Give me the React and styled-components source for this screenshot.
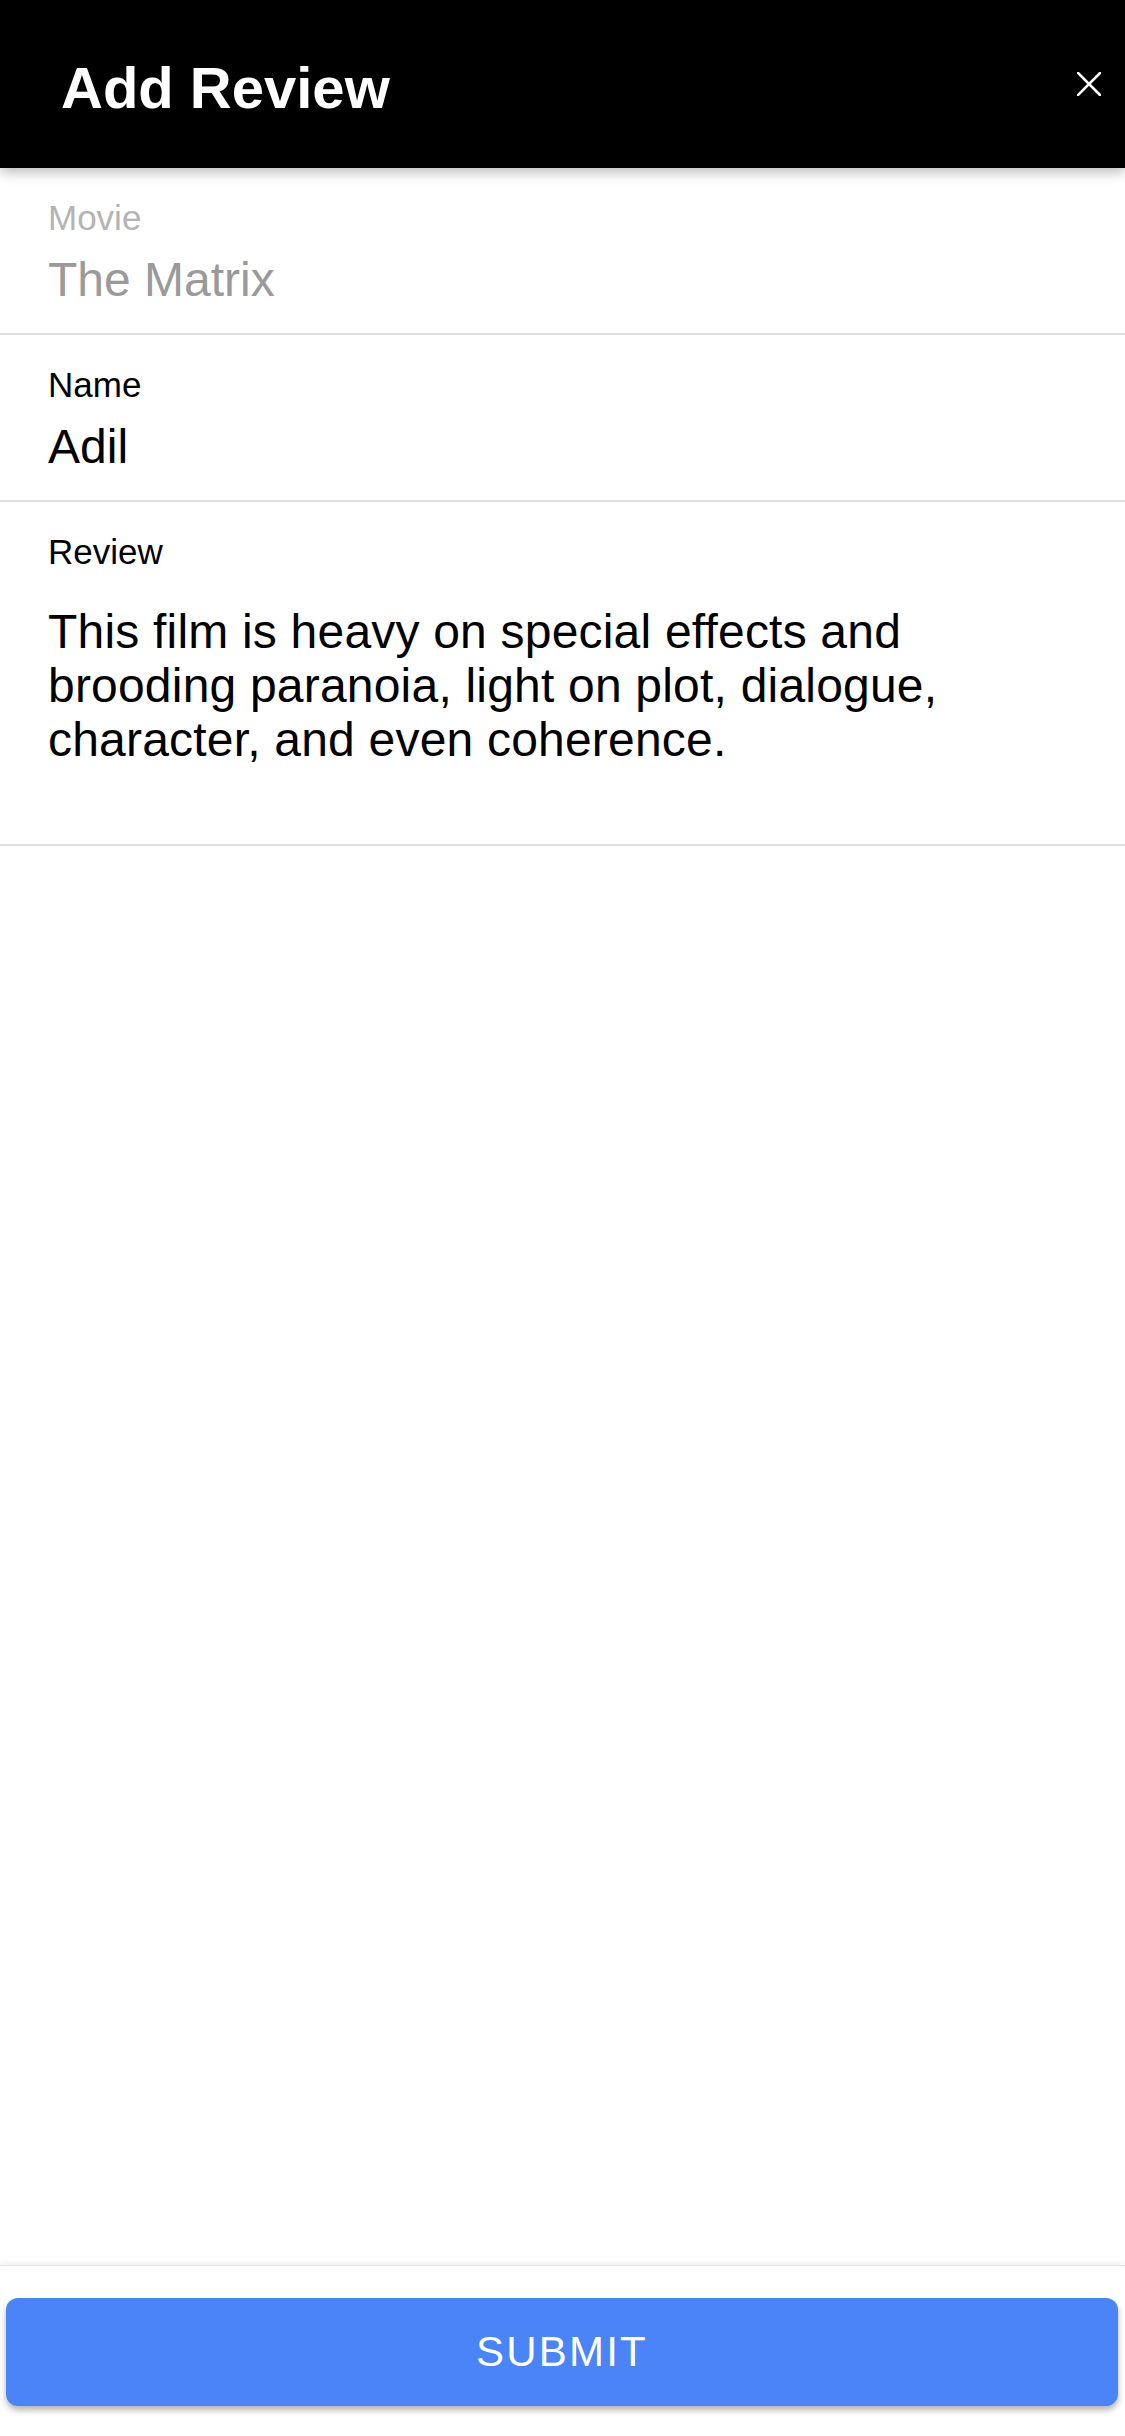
import React from "react";
import styled, { createGlobalStyle } from "styled-components";

const GlobalStyle = createGlobalStyle`
  html, body {
    margin: 0;
    padding: 0;
    background: #ffffff;
    font-family: "Liberation Sans", Arial, Helvetica, sans-serif;
  }
  * { box-sizing: border-box; }
`;

const Screen = styled.div`
  width: 1125px;
  height: 2436px;
  display: flex;
  flex-direction: column;
  background: #ffffff;
  overflow: hidden;
`;

const Header = styled.header`
  height: 168px;
  flex: 0 0 168px;
  background: #000000;
  display: flex;
  align-items: center;
  justify-content: space-between;
  padding: 0 24px 0 61px;
  box-shadow: 0 4px 12px rgba(0, 0, 0, 0.28);
  position: relative;
  z-index: 2;
`;

const Title = styled.h1`
  margin: 8px 0 0;
  font-size: 58px;
  line-height: 58px;
  font-weight: 700;
  color: #ffffff;
`;

const CloseButton = styled.button`
  width: 24px;
  height: 24px;
  padding: 0;
  border: none;
  background: transparent;
  display: flex;
  align-items: center;
  justify-content: center;
  cursor: pointer;
`;

const Form = styled.div`
  display: flex;
  flex-direction: column;
`;

const Field = styled.div`
  display: flex;
  flex-direction: column;
  padding: 29px 48px ${(p) => p.$bottom || 25}px;
  border-bottom: 2px solid #dedede;
`;

const Label = styled.div`
  font-size: 35px;
  line-height: 41px;
  color: ${(p) => (p.$disabled ? "#b4b4b4" : "#000000")};
`;

const Value = styled.div`
  margin-top: ${(p) => (p.$multiline ? 33 : 14)}px;
  font-size: 48px;
  line-height: ${(p) => (p.$multiline ? 54 : 56)}px;
  letter-spacing: ${(p) => (p.$multiline ? "0.2px" : "0")};
  color: ${(p) => (p.$disabled ? "#9a9a9a" : "#000000")};
`;

const Spacer = styled.div`
  flex: 1;
`;

const Footer = styled.footer`
  flex: 0 0 170px;
  padding: 32px 7px 30px 6px;
  background: #ffffff;
  border-top: 1px solid #e6e6e6;
  box-shadow: 0 -2px 5px rgba(0, 0, 0, 0.06);
  display: flex;
`;

const SubmitButton = styled.button`
  flex: 1;
  height: 108px;
  border: none;
  border-radius: 12px;
  background: #4a84f6;
  color: #ffffff;
  font-family: "Liberation Sans", Arial, Helvetica, sans-serif;
  font-size: 42px;
  letter-spacing: 2.2px;
  font-weight: 400;
  box-shadow: 0 4px 6px rgba(0, 0, 0, 0.3);
  cursor: pointer;
`;

export default function App() {
  return (
    <>
      <GlobalStyle />
      <Screen>
        <Header>
          <Title>Add Review</Title>
          <CloseButton aria-label="Close">
            <svg width="24" height="24" viewBox="0 0 24 24">
              <path d="M1 1 L23 23 M23 1 L1 23" stroke="#ffffff" strokeWidth="2.6" strokeLinecap="square" fill="none" />
            </svg>
          </CloseButton>
        </Header>
        <Form>
          <Field>
            <Label $disabled>Movie</Label>
            <Value $disabled>The Matrix</Value>
          </Field>
          <Field>
            <Label>Name</Label>
            <Value>Adil</Value>
          </Field>
          <Field $bottom={77}>
            <Label>Review</Label>
            <Value $multiline>
              This film is heavy on special effects and brooding paranoia, light on plot, dialogue, character, and even coherence.
            </Value>
          </Field>
        </Form>
        <Spacer />
        <Footer>
          <SubmitButton>SUBMIT</SubmitButton>
        </Footer>
      </Screen>
    </>
  );
}
